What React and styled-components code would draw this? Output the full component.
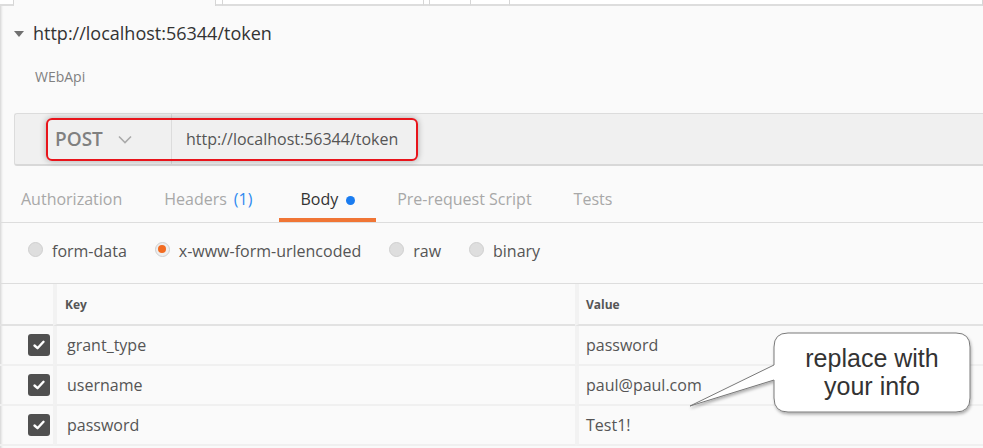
import React from 'react'
import styled, {createGlobalStyle} from 'styled-components'

const GlobalStyle = createGlobalStyle`
    html, body {
        margin: 0;
        padding: 0;
        background: #fafafa;
    }
    body {
        font-family: "Open Sans", "Noto Sans", sans-serif;
        color: #555;
    }
`

const Page = styled.div`
    position: relative;
    width: 983px;
    height: 448px;
    overflow: hidden;
    background: #fafafa;
    box-shadow: inset 3px 0 3px -2px rgba(0,0,0,0.18);
`

const TopStrip = styled.div`
    display: flex;
    height: 6px;
`

const StripTab = styled.div`
    box-sizing: border-box;
    flex: ${p => p.$grow ? '1' : 'none'};
    width: ${p => p.$w || 0}px;
    height: 6px;
    background: ${p => p.$active ? '#fafafa' : '#fff'};
    border-bottom: ${p => p.$active ? 'none' : '2px solid #ddd'};
    border-right: 1px solid #d6d6d6;
`

const TitleRow = styled.div`
    display: flex;
    align-items: center;
    gap: 9px;
    margin: 15px 0 0 14px;
    height: 24px;
`

const Caret = styled.span`
    width: 0;
    height: 0;
    border-left: 5px solid transparent;
    border-right: 5px solid transparent;
    border-top: 6px solid #707070;
    margin-top: 1px;
`

const Title = styled.h1`
    margin: 0;
    font-size: 18px;
    font-weight: 400;
    color: #333;
    line-height: 24px;
`

const Description = styled.div`
    margin: 23px 0 0 35px;
    font-size: 14px;
    line-height: 18px;
    color: #808080;
`

const RequestBar = styled.div`
    position: relative;
    box-sizing: border-box;
    display: flex;
    margin: 27px 0 0 14px;
    height: 53px;
    background: #f0f0f0;
    border: 1px solid #dcdcdc;
    border-bottom: 2px solid #d8d8d8;
    border-right: none;
    border-radius: 3px 0 0 3px;
`

const MethodSelect = styled.div`
    box-sizing: border-box;
    width: 157px;
    display: flex;
    align-items: center;
    padding-left: 40px;
    gap: 15px;
    border-right: 1px solid #dcdcdc;
    font-size: 19px;
    font-weight: 600;
    color: #808080;
`

const UrlField = styled.div`
    display: flex;
    align-items: center;
    padding-left: 14px;
    font-size: 16px;
    color: #555;
`

const Highlight = styled.div`
    position: absolute;
    left: 31px;
    top: 4px;
    width: 372px;
    height: 43px;
    box-sizing: border-box;
    border: 2px solid #e8141b;
    border-radius: 6px;
    box-shadow: 0 0 6px rgba(0,0,0,0.3);
    pointer-events: none;
`

const TabBar = styled.div`
    display: flex;
    height: 56px;
    border-bottom: 1px solid #ddd;
`

const Tab = styled.div`
    box-sizing: border-box;
    display: flex;
    align-items: center;
    gap: 8px;
    padding: 14px 21px 0;
    margin-right: ${p => p.$mr || 0}px;
    font-size: 16px;
    color: ${p => p.$active ? '#333' : '#a8a8a8'};
    border-bottom: 4px solid ${p => p.$active ? '#f07535' : 'transparent'};
`

const Count = styled.span`
    color: #2f8af0;
    margin-left: -1px;
`

const Dot = styled.span`
    width: 9px;
    height: 9px;
    border-radius: 50%;
    background: #1a7cf0;
    margin-top: 2px;
`

const RadioRow = styled.div`
    box-sizing: border-box;
    display: flex;
    align-items: center;
    height: 60px;
    padding: 0 0 5px 28px;
    gap: 28px;
`

const RadioOption = styled.label`
    display: flex;
    align-items: center;
    gap: 9px;
    font-size: 16px;
    color: #555;
`

const RadioCircle = styled.span`
    box-sizing: border-box;
    width: 15px;
    height: 15px;
    border-radius: 50%;
    background: ${p => p.$checked ? '#eee' : '#dedede'};
    border: 1px solid #cfcfcf;
    display: flex;
    align-items: center;
    justify-content: center;
    margin-top: -3px;

    &::after {
        content: '';
        display: ${p => p.$checked ? 'block' : 'none'};
        width: 8px;
        height: 8px;
        border-radius: 50%;
        background: #f26b21;
    }
`

const Table = styled.div`
    display: grid;
    grid-template-columns: 53px 522px 1fr;
    border-top: 1px solid #ddd;
`

const HeadCell = styled.div`
    box-sizing: border-box;
    height: 42px;
    display: flex;
    align-items: center;
    padding-left: ${p => p.$pl || 0}px;
    font-size: 12px;
    font-weight: 700;
    color: #555;
    border-bottom: 2px solid #e2e2e2;
    border-left: ${p => p.$divider ? '4px solid #f2f2f2' : 'none'};
`

const Cell = styled.div`
    box-sizing: border-box;
    height: 40px;
    display: flex;
    align-items: center;
    justify-content: ${p => p.$center ? 'flex-end' : 'flex-start'};
    padding-left: ${p => p.$pl || 0}px;
    padding-right: ${p => p.$pr || 0}px;
    font-size: 16px;
    color: #555;
    border-bottom: 2px solid #f0f0f0;
    border-left: ${p => p.$divider ? '4px solid #f2f2f2' : 'none'};
`

const Checkbox = styled.span`
    width: 22px;
    height: 22px;
    border-radius: 3px;
    background: #505050;
    display: flex;
    align-items: center;
    justify-content: center;
`

const Callout = styled.div`
    position: absolute;
    left: 680px;
    top: 325px;
    width: 300px;
    height: 95px;
`

const CalloutText = styled.div`
    position: absolute;
    left: 94px;
    top: 19px;
    width: 196px;
    text-align: center;
    font-family: "Liberation Sans", Arial, sans-serif;
    font-size: 25px;
    line-height: 28px;
    color: #333;
`

const CheckIcon = () => (
    <svg width="14" height="14" viewBox="0 0 14 14">
        <path d="M2.5 7.5 L5.5 10.2 L11.5 3.8" fill="none" stroke="#fff" strokeWidth="2.4" strokeLinecap="round" strokeLinejoin="round"/>
    </svg>
)

const Chevron = () => (
    <svg width="14" height="9" viewBox="0 0 14 9">
        <path d="M1 1.5 L7 7.5 L13 1.5" fill="none" stroke="#aaa" strokeWidth="1.6"/>
    </svg>
)

const rows = [
    ['grant_type', 'password'],
    ['username', 'paul@paul.com'],
    ['password', 'Test1!'],
]

const radios = [
    ['form-data', false],
    ['x-www-form-urlencoded', true],
    ['raw', false],
    ['binary', false],
]

export default function App() {
    return (
        <Page>
            <GlobalStyle/>
            <TopStrip>
                <StripTab $w={14}/>
                <StripTab $w={202} $active/>
                <StripTab $w={7}/>
                <StripTab $w={201}/>
                <StripTab $w={6}/>
                <StripTab $w={41}/>
                <StripTab $w={39}/>
                <StripTab $grow/>
            </TopStrip>

            <TitleRow>
                <Caret/>
                <Title>http://localhost:56344/token</Title>
            </TitleRow>
            <Description>WEbApi</Description>

            <RequestBar>
                <MethodSelect>
                    POST
                    <Chevron/>
                </MethodSelect>
                <UrlField>http://localhost:56344/token</UrlField>
                <Highlight/>
            </RequestBar>

            <TabBar>
                <Tab>Authorization</Tab>
                <Tab $mr={6}>Headers <Count>(1)</Count></Tab>
                <Tab $active>Body <Dot/></Tab>
                <Tab>Pre-request Script</Tab>
                <Tab>Tests</Tab>
            </TabBar>

            <RadioRow>
                {radios.map(([label, checked]) => (
                    <RadioOption key={label}>
                        <RadioCircle $checked={checked}/>
                        {label}
                    </RadioOption>
                ))}
            </RadioRow>

            <Table>
                <HeadCell/>
                <HeadCell $divider $pl={8}>Key</HeadCell>
                <HeadCell $divider $pl={7}>Value</HeadCell>
                {rows.map(([k, v]) => (
                    <React.Fragment key={k}>
                        <Cell $center $pr={3}><Checkbox><CheckIcon/></Checkbox></Cell>
                        <Cell $divider $pl={10}>{k}</Cell>
                        <Cell $divider $pl={7}>{v}</Cell>
                    </React.Fragment>
                ))}
            </Table>

            <Callout>
                <svg width="300" height="95" viewBox="0 0 300 95" style={{overflow: 'visible'}}>
                    <defs>
                        <filter id="sh" x="-10%" y="-20%" width="130%" height="150%">
                            <feDropShadow dx="1" dy="2" stdDeviation="1.5" floodColor="#000" floodOpacity="0.3"/>
                        </filter>
                    </defs>
                    <path
                        d="M108 8 H276 Q290 8 290 22 V73 Q290 87 276 87 H108 Q94 87 94 73 V55 L10 81 L94 40 V22 Q94 8 108 8 Z"
                        fill="#fff" stroke="#7a7a7a" strokeWidth="1" filter="url(#sh)"
                    />
                </svg>
                <CalloutText>replace with<br/>your info</CalloutText>
            </Callout>
        </Page>
    )
}
